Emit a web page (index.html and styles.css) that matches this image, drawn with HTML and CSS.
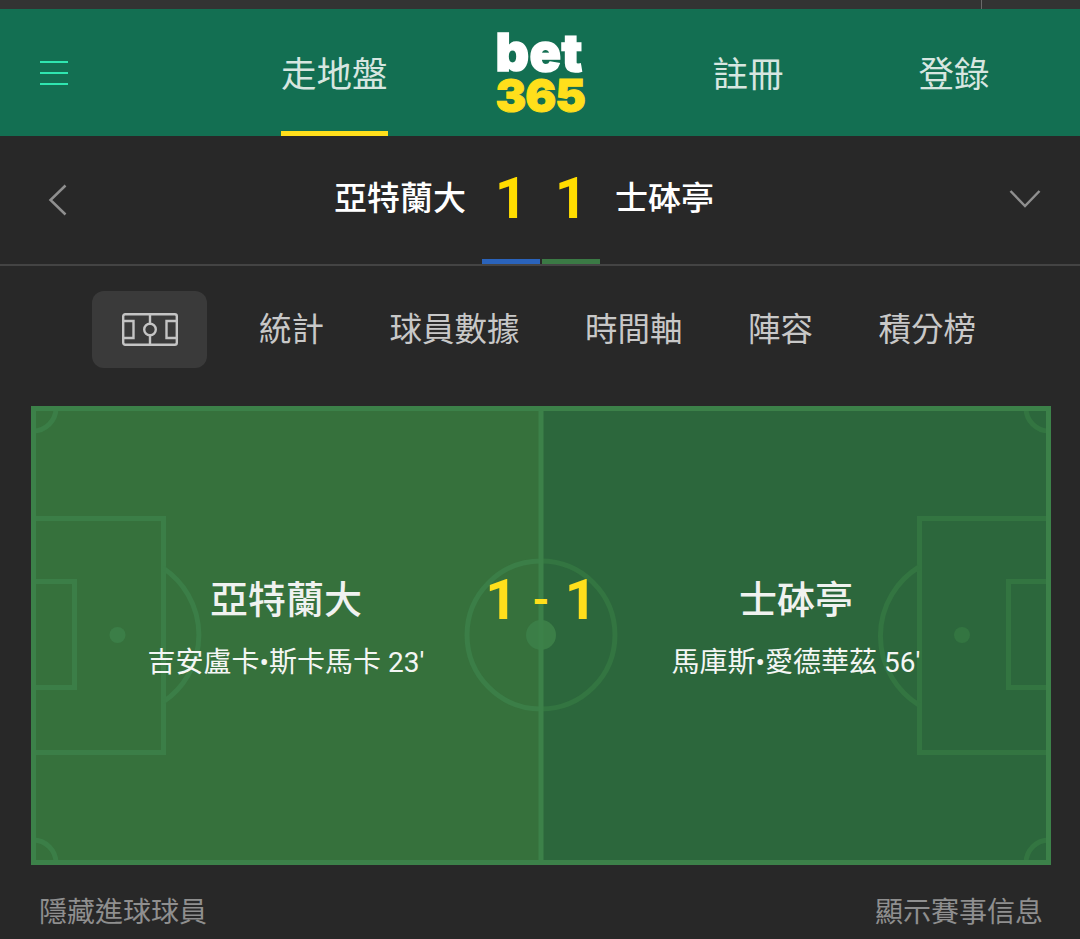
FILE: index.html
```html
<!DOCTYPE html>
<html lang="zh-Hant">
<head>
    <meta charset="UTF-8">
    <meta name="viewport" content="width=device-width, initial-scale=1.0">
    <title>bet365 走地盤</title>
    <link rel="stylesheet" href="styles.css">
</head>
<body>
    <div class="status-bar"><span class="status-line"></span></div>

    <header class="site-header">
        <div class="menu-icon"><span></span><span></span><span></span></div>
        <a class="nav-link nav-active">走地盤</a>
        <div class="logo">
            <span class="logo-bet">bet</span>
            <span class="logo-365">365</span>
        </div>
        <a class="nav-link nav-register">註冊</a>
        <a class="nav-link nav-login">登錄</a>
    </header>

    <section class="match-bar">
        <svg class="chevron-left" width="20" height="32" viewBox="0 0 20 32">
            <path d="M17.5 1.5 L2.5 16 L17.5 30.5" fill="none" stroke="#8f8f8f" stroke-width="2.5"/>
        </svg>
        <div class="match-score">
            <span class="match-team team-home">亞特蘭大</span>
            <span class="match-goal">1</span>
            <span class="match-goal">1</span>
            <span class="match-team team-away">士砵亭</span>
        </div>
        <svg class="chevron-down" width="32" height="20" viewBox="0 0 32 20">
            <path d="M1.5 2 L16 17 L30.5 2" fill="none" stroke="#8f8f8f" stroke-width="2.5"/>
        </svg>
        <div class="team-colors"><span class="color-home"></span><span class="color-away"></span></div>
    </section>

    <nav class="tabs">
        <div class="tab-pitch">
            <svg width="56" height="33" viewBox="0 0 56 33" fill="none" stroke="#c4c4c4" stroke-width="2.4">
                <rect x="1.2" y="1.2" width="53.6" height="30.6" rx="2"/>
                <path d="M28 1.2 V10.5 M28 22.5 V31.8"/>
                <circle cx="28" cy="16.5" r="5.8"/>
                <path d="M1.2 8 H11.5 V25 H1.2 M54.8 8 H44.5 V25 H54.8"/>
            </svg>
        </div>
        <a class="tab">統計</a>
        <a class="tab">球員數據</a>
        <a class="tab">時間軸</a>
        <a class="tab">陣容</a>
        <a class="tab">積分榜</a>
    </nav>

    <section class="pitch">
        <svg class="pitch-lines" width="1020" height="459" viewBox="0 0 1020 459" fill="none" stroke-width="5">
            <rect x="0" y="0" width="510" height="459" fill="#36713c"/>
            <rect x="510" y="0" width="510" height="459" fill="#2c673c"/>
            <g stroke="#3b7e47">
                <path d="M2 25 A23 23 0 0 0 25 2"/>
                <path d="M2 434 A23 23 0 0 1 25 457"/>
                <rect x="2.5" y="112.5" width="130" height="234"/>
                <rect x="2.5" y="175.5" width="41" height="106"/>
                <path d="M132 162 A80.5 80.5 0 0 1 132 296"/>
                <circle cx="86.5" cy="229" r="8" fill="#3b7e47" stroke="none"/>
                <path d="M510 155 A74 74 0 0 0 510 303"/>
            </g>
            <g stroke="#337541">
                <path d="M1018 25 A23 23 0 0 1 995 2"/>
                <path d="M1018 434 A23 23 0 0 0 995 457"/>
                <rect x="888.5" y="112.5" width="129" height="234"/>
                <rect x="977.5" y="175.5" width="40" height="106"/>
                <path d="M888 161 A81 81 0 0 0 888 299"/>
                <circle cx="931" cy="229" r="8" fill="#337541" stroke="none"/>
                <path d="M510 155 A74 74 0 0 1 510 303"/>
            </g>
            <circle cx="510" cy="229" r="15" fill="#3b7e47"/>
            <path d="M510 0 V459" stroke="#3c8149"/>
            <rect x="2.5" y="2.5" width="1015" height="454" stroke="#3c8149"/>
        </svg>
        <div class="pitch-info">
            <div class="pitch-team team-left">亞特蘭大</div>
            <div class="pitch-team team-right">士砵亭</div>
            <div class="pitch-score">1<span class="pitch-dash">-</span>1</div>
            <div class="pitch-scorer team-left">吉安盧卡•斯卡馬卡 23'</div>
            <div class="pitch-scorer team-right">馬庫斯•愛德華茲 56'</div>
        </div>
    </section>

    <footer class="pitch-footer">
        <a>隱藏進球球員</a>
        <a>顯示賽事信息</a>
    </footer>
</body>
</html>
```

FILE: styles.css
```css
html, body {
    margin: 0;
    padding: 0;
}
body {
    width: 1080px;
    height: 939px;
    overflow: hidden;
    background-color: #282828;
    font-family: Roboto, "Noto Sans CJK TC", sans-serif;
}
.status-bar {
    height: 9px;
    background-color: #333333;
    display: flex;
    justify-content: flex-end;
    padding-right: 98px;
}
.status-line {
    width: 1px;
    background-color: #6a6a6a;
}

/* top header */
.site-header {
    height: 127px;
    background-color: #136f52;
    display: flex;
}
.menu-icon {
    width: 28px;
    margin: 52px 0 0 40px;
    display: flex;
    flex-direction: column;
    gap: 9px;
}
.menu-icon span {
    height: 2px;
    background-color: #2fe6b0;
}
.nav-link {
    height: 127px;
    box-sizing: border-box;
    padding-top: 38px;
    font-size: 35.5px;
    line-height: 56px;
    color: #d7e6e0;
}
.nav-active {
    margin-left: 213px;
    border-bottom: 5px solid #ffdf1b;
}
.nav-register {
    margin-left: 127px;
}
.nav-login {
    margin-left: 135px;
}
.logo {
    margin: 19px 0 0 108px;
    width: 90px;
    display: flex;
    flex-direction: column;
    font-family: Inter, sans-serif;
    font-weight: 900;
    letter-spacing: -1px;
}
.logo-bet {
    font-size: 52px;
    line-height: 49px;
    letter-spacing: 0.5px;
    color: #ffffff;
    -webkit-text-stroke: 1.5px #ffffff;
}
.logo-365 {
    font-size: 46px;
    line-height: 37px;
    color: #ffdf1b;
    -webkit-text-stroke: 1px #ffdf1b;
}

/* match score bar */
.match-bar {
    height: 128px;
    border-bottom: 2px solid #444444;
    position: relative;
    display: flex;
    align-items: center;
}
.chevron-left {
    margin-left: 48px;
}
.chevron-down {
    margin-left: auto;
    margin-right: 39px;
    margin-top: -2px;
}
.match-score {
    position: absolute;
    left: 334px;
    top: 30px;
    display: flex;
    align-items: center;
}
.match-team {
    font-size: 33px;
    font-weight: 500;
    line-height: 66px;
    color: #ffffff;
}
.match-goal {
    font-size: 57px;
    font-weight: 700;
    line-height: 66px;
    color: #ffdd00;
    width: 60px;
    text-align: center;
}
.team-home {
    margin-right: 15px;
}
.team-away {
    margin-left: 14px;
}
.team-colors {
    position: absolute;
    left: 482px;
    bottom: 0;
    display: flex;
    gap: 2px;
}
.team-colors span {
    width: 58px;
    height: 5px;
}
.color-home {
    background-color: #2a63bb;
}
.color-away {
    background-color: #3b7a45;
}

/* tabs */
.tabs {
    height: 140px;
    box-sizing: border-box;
    padding: 25px 0 0 92px;
    display: flex;
    align-items: flex-start;
}
.tab-pitch {
    width: 115px;
    height: 77px;
    background-color: #3a3a3a;
    border-radius: 12px;
    display: flex;
    align-items: center;
    justify-content: center;
    margin-right: 52px;
}
.tab {
    font-size: 32.5px;
    line-height: 78px;
    color: #c8c8c8;
    margin-right: 65.5px;
}

/* pitch */
.pitch {
    position: relative;
    width: 1020px;
    height: 459px;
    margin-left: 31px;
}
.pitch-lines {
    position: absolute;
    left: 0;
    top: 0;
}
.pitch-info {
    position: relative;
    padding-top: 164px;
    display: grid;
    grid-template-columns: 510px 510px;
    justify-items: center;
}
.team-left {
    grid-column: 1;
}
.team-right {
    grid-column: 2;
}
.pitch-team {
    grid-row: 1;
    font-size: 38px;
    font-weight: 500;
    line-height: 60px;
    color: #f0f2f0;
}
.pitch-score {
    grid-row: 1;
    grid-column: 1 / 3;
    font-size: 56px;
    font-weight: 700;
    line-height: 60px;
    color: #ffdf1b;
}
.pitch-dash {
    font-size: 44px;
    font-weight: 700;
    margin: 0 15px;
    vertical-align: 4px;
}
.pitch-scorer {
    grid-row: 2;
    margin-top: 13px;
    font-size: 28px;
    line-height: 40px;
    color: #f4f6f4;
}

/* footer links */
.pitch-footer {
    display: flex;
    justify-content: space-between;
    padding: 28px 37px 0 39px;
    font-size: 28px;
    line-height: 40px;
    color: #8f8f8f;
}
```
